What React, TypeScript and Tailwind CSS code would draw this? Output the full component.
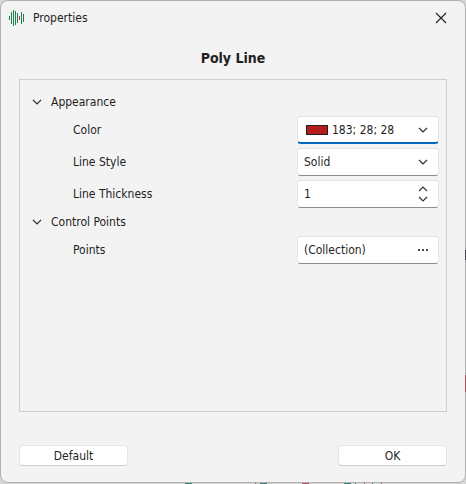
import React, { useState } from 'react';

const Chevron: React.FC<{ up?: boolean; className?: string }> = ({ up, className = '' }) => (
  <svg viewBox="0 0 10 6" className={`w-[10px] h-[6px] shrink-0 ${className}`} fill="none" stroke="#2b2b2b" strokeWidth="1.1">
    <path d={up ? 'M1 5L5 1L9 5' : 'M1 1L5 5L9 1'} />
  </svg>
);

const waveBars = [
  { x: 9, y: 15, h: 4, color: '#1d8049' },
  { x: 11, y: 11, h: 12, color: '#1d8049' },
  { x: 13, y: 9, h: 16, color: '#1d8049' },
  { x: 15, y: 10, h: 14, color: '#1d8049' },
  { x: 17, y: 12, h: 10, color: '#1d8049' },
  { x: 19, y: 15, h: 4, color: '#b5302a' },
  { x: 21, y: 11, h: 12, color: '#1d8049' },
  { x: 23, y: 13, h: 8, color: '#1d8049' },
];

const WaveLogo: React.FC = () => (
  <svg viewBox="9 9 16 16" className="w-4 h-4" shapeRendering="crispEdges">
    {waveBars.map((bar) => (
      <rect key={bar.x} x={bar.x} y={bar.y} width="1" height={bar.h} fill={bar.color} />
    ))}
  </svg>
);

// candles of the chart behind the dialog that show past its edges
const ChartEdges: React.FC = () => (
  <>
    <svg className="absolute left-0 bottom-0 w-[466px] h-px pointer-events-none" viewBox="0 0 466 1" shapeRendering="crispEdges">
      <path d="M185 0h7v1h-7zM260 0h7v1h-7zM344 0h7v1h-7zM355 0h1v1h-1zM372 0h1v1h-1z" fill="#3a7d74" />
      <path d="M255 0h1v1h-1zM302 0h7v1h-7zM364 0h1v1h-1zM381 0h1v1h-1z" fill="#b0505e" />
    </svg>
    <svg className="absolute right-0 top-0 w-px h-[484px] pointer-events-none" viewBox="0 0 1 484" shapeRendering="crispEdges">
      <path d="M0 250h1v10h-1z" fill="#45404a" />
      <path d="M0 375h1v17h-1z" fill="#b0505e" />
    </svg>
  </>
);

const field = 'w-full h-7 rounded bg-white border border-[#e5e5e5] border-b-[#8c8c8c] outline-none';

const Group: React.FC<{ title: string; children: React.ReactNode }> = ({ title, children }) => {
  const [open, setOpen] = useState(true);
  return (
    <section>
      <button
        type="button"
        aria-expanded={open}
        onClick={() => setOpen(!open)}
        className="flex items-center w-full h-6 pl-3 gap-[9px] text-left"
      >
        <Chevron />
        {title}
      </button>
      {open && children}
    </section>
  );
};

const Row: React.FC<{ label: string; htmlFor: string; children: React.ReactNode }> = ({ label, htmlFor, children }) => (
  <div className="flex items-center h-8 pl-[53px] pr-[7px]">
    <label htmlFor={htmlFor} className="flex-1">{label}</label>
    <div className="relative flex items-center w-[142px]">{children}</div>
  </div>
);

const App: React.FC = () => {
  const [thickness, setThickness] = useState(1);

  return (
    <div className="relative min-h-screen flex flex-col bg-[#d6d6d6] pb-px font-['DejaVu_Sans_Condensed','DejaVu_Sans',sans-serif] text-xs text-[#1f1f1f]">
      <main className="flex-1 flex flex-col rounded-lg border border-[#b0b0b0] bg-[#f3f3f3]">
        <header className="flex items-center h-[33px] pl-2 pr-[18px]">
          <WaveLogo />
          <h1 className="flex-1 pl-2">Properties</h1>
          <button type="button" aria-label="Close">
            <svg viewBox="0 0 12 12" className="w-3 h-3" fill="none" stroke="#1f1f1f" strokeWidth="1.1">
              <path d="M1 1L11 11M11 1L1 11" />
            </svg>
          </button>
        </header>

        <h2 className="h-[45px] pt-[14px] text-center text-sm font-bold">Poly Line</h2>

        <div className="flex-1 mx-[18px] pt-[10px] border border-[#cfcfcf]">
          <Group title="Appearance">
            <Row label="Color" htmlFor="color">
              <select id="color" className={`${field} appearance-none pl-[34px] border-b-2 border-b-[#0067c0]`}>
                <option>183; 28; 28</option>
              </select>
              <span className="absolute left-[9px] w-[22px] h-[10px] border border-[#1f1f1f] bg-[#b71c1c] pointer-events-none" />
              <Chevron className="absolute right-[11px] pointer-events-none" />
            </Row>
            <Row label="Line Style" htmlFor="style">
              <select id="style" className={`${field} appearance-none pl-[6px]`}>
                <option>Solid</option>
              </select>
              <Chevron className="absolute right-[11px] pointer-events-none" />
            </Row>
            <Row label="Line Thickness" htmlFor="thickness">
              <input
                id="thickness"
                value={thickness}
                onChange={(e) => setThickness(Number(e.target.value) || 0)}
                className={`${field} pl-[6px]`}
              />
              <div className="absolute right-[11px] flex flex-col gap-1">
                <button type="button" aria-label="Increase" onClick={() => setThickness(thickness + 1)}>
                  <Chevron up />
                </button>
                <button type="button" aria-label="Decrease" onClick={() => setThickness(thickness - 1)}>
                  <Chevron />
                </button>
              </div>
            </Row>
          </Group>
          <Group title="Control Points">
            <Row label="Points" htmlFor="points">
              <input id="points" readOnly value="(Collection)" className={`${field} pl-[6px]`} />
              <button type="button" aria-label="Edit points" className="absolute right-[11px] flex gap-[2px]">
                <span className="w-[2px] h-[2px] bg-[#4a4a4a]" />
                <span className="w-[2px] h-[2px] bg-[#4a4a4a]" />
                <span className="w-[2px] h-[2px] bg-[#4a4a4a]" />
              </button>
            </Row>
          </Group>
        </div>

        <footer className="flex justify-between px-[18px] pt-[33px] pb-4">
          <button type="button" className="w-[109px] h-[21px] rounded bg-white border border-[#e5e5e5] border-b-[#cccccc]">Default</button>
          <button type="button" className="w-[109px] h-[21px] rounded bg-white border border-[#e5e5e5] border-b-[#cccccc]">OK</button>
        </footer>
      </main>
      <ChartEdges />
    </div>
  );
};

export default App;
